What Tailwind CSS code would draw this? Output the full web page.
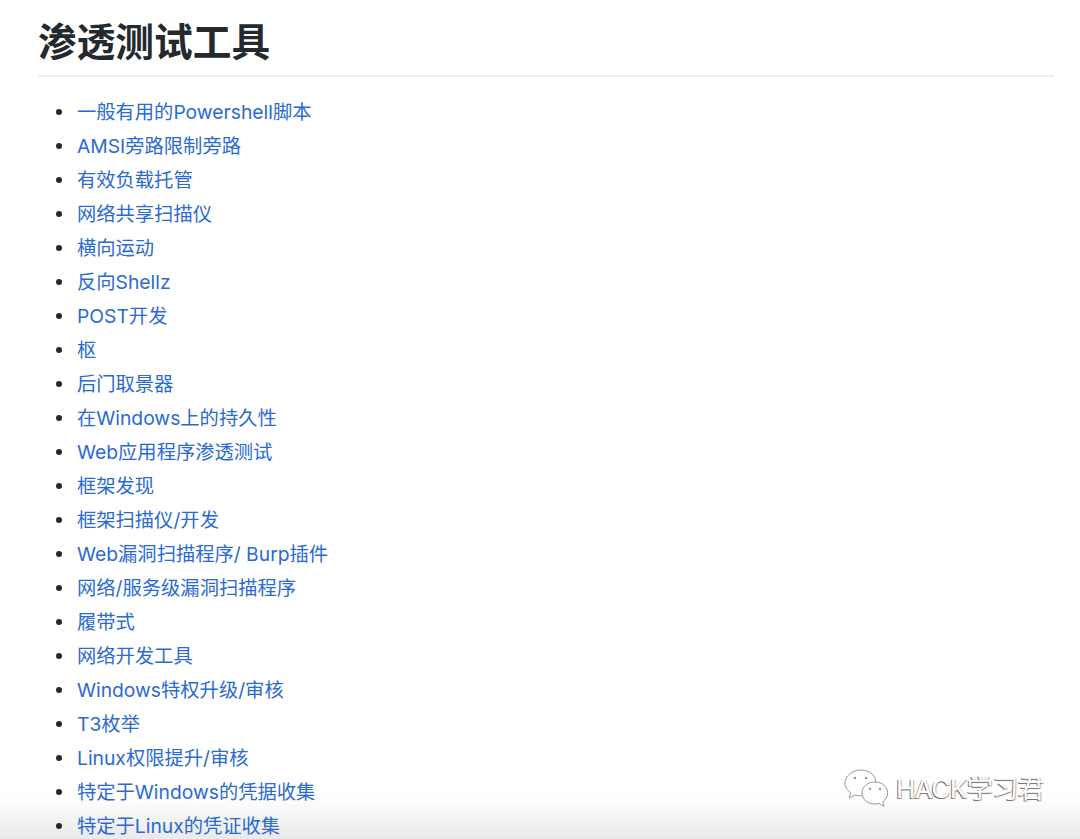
<!DOCTYPE html>
<html lang="zh-CN">
  <head>
    <meta charset="UTF-8" />
    <title>渗透测试工具</title>
    <script src="https://cdn.jsdelivr.net/npm/@tailwindcss/browser@4"></script>
  </head>
  <body class="relative h-[839px] w-[1080px] overflow-hidden bg-white font-['Inter','Noto_Sans_CJK_SC',sans-serif]">
    <!-- Bottom fade, sits behind the text -->
    <div class="pointer-events-none absolute inset-x-0 bottom-0 h-[44px] bg-gradient-to-b from-white to-[#e9e9e9]"></div>

    <!-- Page content -->
    <div class="relative pl-[38px] pr-[26px] pt-[15px]">
      <h1 class="h-[62px] border-b-2 border-[#f0f0f0] text-[38.7px] leading-[54px] font-bold text-[#24292e]">渗透测试工具</h1>
      <ul class="mt-[18px] pl-[18px] text-[19.3px] leading-[34px] text-[#2a6ad2]">
        <li class="flex items-center"><span class="mr-[15px] size-[6px] rounded-full bg-[#24292e]"></span><a href="#">一般有用的Powershell脚本</a></li>
        <li class="flex items-center"><span class="mr-[15px] size-[6px] rounded-full bg-[#24292e]"></span><a href="#">AMSI旁路限制旁路</a></li>
        <li class="flex items-center"><span class="mr-[15px] size-[6px] rounded-full bg-[#24292e]"></span><a href="#">有效负载托管</a></li>
        <li class="flex items-center"><span class="mr-[15px] size-[6px] rounded-full bg-[#24292e]"></span><a href="#">网络共享扫描仪</a></li>
        <li class="flex items-center"><span class="mr-[15px] size-[6px] rounded-full bg-[#24292e]"></span><a href="#">横向运动</a></li>
        <li class="flex items-center"><span class="mr-[15px] size-[6px] rounded-full bg-[#24292e]"></span><a href="#">反向Shellz</a></li>
        <li class="flex items-center"><span class="mr-[15px] size-[6px] rounded-full bg-[#24292e]"></span><a href="#">POST开发</a></li>
        <li class="flex items-center"><span class="mr-[15px] size-[6px] rounded-full bg-[#24292e]"></span><a href="#">枢</a></li>
        <li class="flex items-center"><span class="mr-[15px] size-[6px] rounded-full bg-[#24292e]"></span><a href="#">后门取景器</a></li>
        <li class="flex items-center"><span class="mr-[15px] size-[6px] rounded-full bg-[#24292e]"></span><a href="#">在Windows上的持久性</a></li>
        <li class="flex items-center"><span class="mr-[15px] size-[6px] rounded-full bg-[#24292e]"></span><a href="#">Web应用程序渗透测试</a></li>
        <li class="flex items-center"><span class="mr-[15px] size-[6px] rounded-full bg-[#24292e]"></span><a href="#">框架发现</a></li>
        <li class="flex items-center"><span class="mr-[15px] size-[6px] rounded-full bg-[#24292e]"></span><a href="#">框架扫描仪/开发</a></li>
        <li class="flex items-center"><span class="mr-[15px] size-[6px] rounded-full bg-[#24292e]"></span><a href="#">Web漏洞扫描程序/ Burp插件</a></li>
        <li class="flex items-center"><span class="mr-[15px] size-[6px] rounded-full bg-[#24292e]"></span><a href="#">网络/服务级漏洞扫描程序</a></li>
        <li class="flex items-center"><span class="mr-[15px] size-[6px] rounded-full bg-[#24292e]"></span><a href="#">履带式</a></li>
        <li class="flex items-center"><span class="mr-[15px] size-[6px] rounded-full bg-[#24292e]"></span><a href="#">网络开发工具</a></li>
        <li class="flex items-center"><span class="mr-[15px] size-[6px] rounded-full bg-[#24292e]"></span><a href="#">Windows特权升级/审核</a></li>
        <li class="flex items-center"><span class="mr-[15px] size-[6px] rounded-full bg-[#24292e]"></span><a href="#">T3枚举</a></li>
        <li class="flex items-center"><span class="mr-[15px] size-[6px] rounded-full bg-[#24292e]"></span><a href="#">Linux权限提升/审核</a></li>
        <li class="flex items-center"><span class="mr-[15px] size-[6px] rounded-full bg-[#24292e]"></span><a href="#">特定于Windows的凭据收集</a></li>
        <li class="flex items-center"><span class="mr-[15px] size-[6px] rounded-full bg-[#24292e]"></span><a href="#">特定于Linux的凭证收集</a></li>
      </ul>
    </div>

    <!-- Watermark -->
    <div class="absolute left-[843px] top-[768px] flex items-center">
      <svg width="49" height="42" viewBox="0 0 49 42" fill="#fff" stroke="#8c8c8c" stroke-width="0.9">
        <path d="M18 2C9 2 2 8 2 15c0 4 2 7 6 10l-2 5 6-3c2 .6 4 .9 6 .9 8 0 15-6 15-13S27 2 18 2z" />
        <path d="M32 14c-7.500 0-13 4.800-13 11s5.500 11 13 11c1.500 0 3-.2 4-.6l5 3-1.300-4.600c3-2 5-5.200 5-8.800 0-6.200-5.500-11-12.700-11z" />
        <circle cx="12" cy="10" r="1.300" fill="#999" stroke="none" />
        <circle cx="23" cy="10" r="1.300" fill="#999" stroke="none" />
        <circle cx="27" cy="21" r="1.200" fill="#999" stroke="none" />
        <circle cx="37" cy="21" r="1.200" fill="#999" stroke="none" />
      </svg>
      <span class="ml-[4px] text-[26px] leading-[32px] tracking-[-0.5px] text-white [text-shadow:-1px_1px_0_#777,1px_1px_1px_#aaa]">HACK学习君</span>
    </div>
  </body>
</html>
